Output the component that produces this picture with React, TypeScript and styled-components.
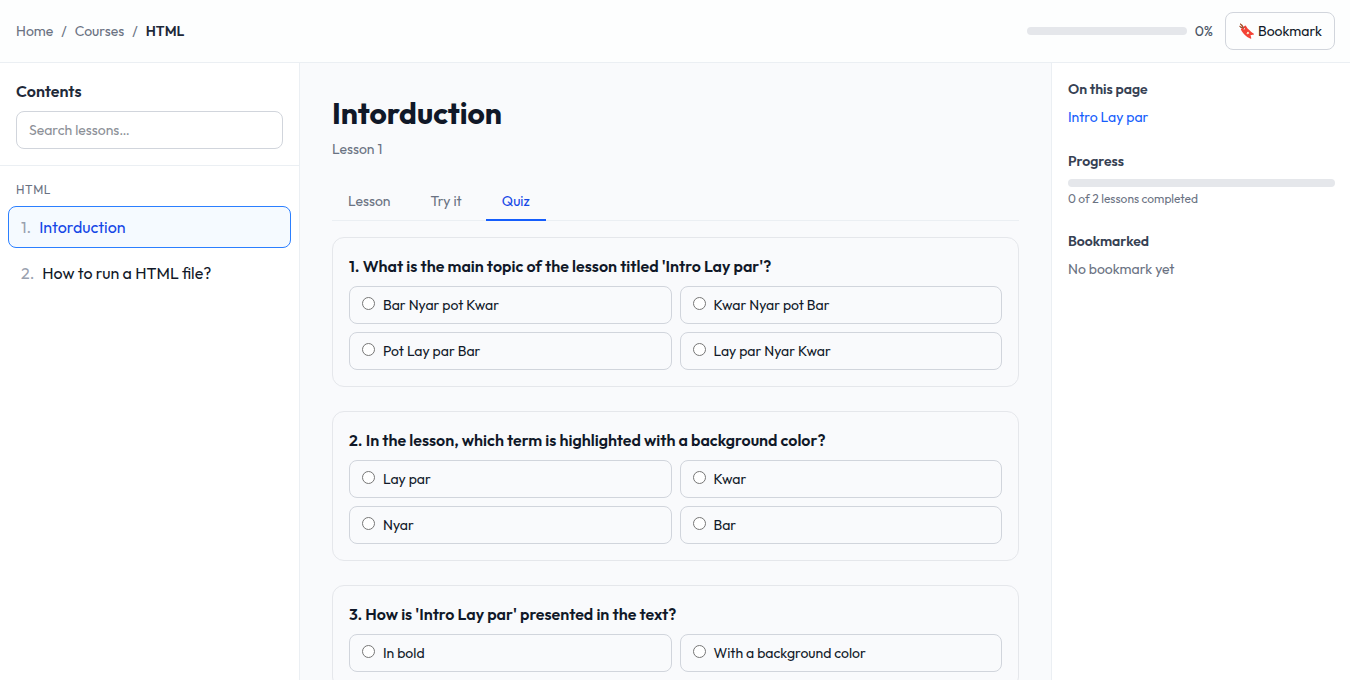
import React, { useState } from "react";
import styled, { createGlobalStyle } from "styled-components";

const GlobalStyle = createGlobalStyle`
  *, *::before, *::after { box-sizing: border-box; }
  body {
    margin: 0;
    background: #f9fafc;
    color: #101828;
    font-family: Outfit, Lato, "Liberation Sans", sans-serif;
    font-size: 16px;
    line-height: 24px;
    -webkit-font-smoothing: antialiased;
  }
  h1, h2, h3, p, ul, ol, fieldset { margin: 0; padding: 0; }
  ul, ol { list-style: none; }
  a { color: inherit; text-decoration: none; }
  button, input { font: inherit; color: inherit; }
`;

const Page = styled.div`
  display: flex;
  flex-direction: column;
  height: 100vh;
`;

const Header = styled.header`
  display: flex;
  align-items: center;
  justify-content: space-between;
  flex: none;
  padding: 12px 15px 12px 16px;
  background: #fdfefe;
  border-bottom: 1px solid #ebeff3;
`;

const Breadcrumbs = styled.ol`
  display: flex;
  gap: 8px;
  font-size: 14px;
  line-height: 20px;
  color: #6a7282;
`;

const Current = styled.span`
  font-weight: 600;
  color: #1e2939;
`;

const HeaderActions = styled.div`
  display: flex;
  align-items: center;
  gap: 12px;
`;

const ProgressGroup = styled.div`
  display: flex;
  align-items: center;
  gap: 8px;
  font-size: 14px;
  line-height: 20px;
  color: #4a5565;
`;

const Track = styled.div<{ $width: string }>`
  width: ${(p) => p.$width};
  height: 8px;
  border-radius: 4px;
  background: #e5e7eb;
  overflow: hidden;
`;

const Fill = styled.div`
  height: 100%;
  background: #155dfc;
`;

const BookmarkButton = styled.button`
  padding: 8px 12px;
  border: 1px solid #d1d5dc;
  border-radius: 8px;
  background: transparent;
  font-size: 14px;
  line-height: 20px;
  cursor: pointer;
`;

const Columns = styled.div`
  display: grid;
  grid-template-columns: 300px minmax(0, 1fr) 299px;
  flex: 1;
  min-height: 0;
`;

const Sidebar = styled.aside`
  background: #fff;
  border-right: 1px solid #ebeff3;
`;

const SearchPanel = styled.div`
  display: flex;
  flex-direction: column;
  gap: 8px;
  padding: 16px;
  border-bottom: 1px solid #ebeff3;
`;

const SidebarTitle = styled.h2`
  font-size: 16px;
  line-height: 24px;
  font-weight: 600;
  color: #1e2939;
`;

const SearchInput = styled.input`
  width: 100%;
  height: 38px;
  padding: 8px 12px;
  border: 1px solid #d1d5dc;
  border-radius: 8px;
  background: #fff;
  font-size: 14px;
  line-height: 20px;
  &::placeholder { color: #8c9097; opacity: 1; }
`;

const LessonNav = styled.nav`
  padding: 8px;
`;

const GroupLabel = styled.h3`
  padding: 8px;
  font-size: 12px;
  line-height: 16px;
  font-weight: 400;
  letter-spacing: 0.05em;
  text-transform: uppercase;
  color: #6a7282;
`;

const LessonList = styled.ol`
  display: flex;
  flex-direction: column;
  gap: 4px;
`;

const LessonLink = styled.a<{ $active?: boolean }>`
  display: flex;
  gap: 8px;
  padding: 8px 12px;
  border: 1px solid ${(p) => (p.$active ? "#2b7fff" : "transparent")};
  border-radius: 8px;
  background: ${(p) => (p.$active ? "#f5faff" : "transparent")};
  color: ${(p) => (p.$active ? "#1447e6" : "#101828")};
`;

const LessonNumber = styled.span`
  color: #99a1af;
`;

const Main = styled.main`
  padding: 32px;
  overflow-y: auto;
  scrollbar-width: none;
`;

const Title = styled.h1`
  font-size: 30px;
  line-height: 36px;
  font-weight: 700;
`;

const Subtitle = styled.p`
  margin-top: 8px;
  font-size: 14px;
  line-height: 20px;
  color: #6a7282;
`;

const Tabs = styled.div`
  display: flex;
  gap: 8px;
  margin: 24px 0 16px;
  border-bottom: 1px solid #ebeff3;
`;

const Tab = styled.button<{ $active: boolean }>`
  margin-bottom: -1px;
  padding: 8px 16px;
  border: 0;
  border-bottom: 2px solid ${(p) => (p.$active ? "#155dfc" : "transparent")};
  background: transparent;
  color: ${(p) => (p.$active ? "#1447e6" : "#6a7282")};
  font-size: 14px;
  line-height: 20px;
  cursor: pointer;
`;

const Questions = styled.form`
  display: flex;
  flex-direction: column;
  gap: 24px;
`;

const Card = styled.section`
  padding: 16px;
  border: 1px solid #e5e7eb;
  border-radius: 12px;
`;

const QuestionTitle = styled.h2`
  margin-bottom: 8px;
  font-size: 16px;
  line-height: 24px;
  font-weight: 600;
`;

const Options = styled.div`
  display: grid;
  grid-template-columns: repeat(2, minmax(0, 1fr));
  gap: 8px;
`;

const Option = styled.label`
  display: flex;
  align-items: flex-start;
  gap: 8px;
  padding: 8px 12px;
  border: 1px solid #d1d5dc;
  border-radius: 8px;
  font-size: 14px;
  line-height: 20px;
  cursor: pointer;
`;

const Radio = styled.input`
  flex: none;
  width: 13px;
  height: 13px;
  margin: 2px 0 0;
`;

const Details = styled.aside`
  display: flex;
  flex-direction: column;
  gap: 24px;
  padding: 16px 15px 16px 16px;
  background: #fff;
  border-left: 1px solid #ebeff3;
  font-size: 14px;
  line-height: 20px;
`;

const DetailsTitle = styled.h2`
  margin-bottom: 8px;
  font-size: 14px;
  line-height: 20px;
  font-weight: 600;
  color: #364153;
`;

const AnchorLink = styled.a`
  color: #155dfc;
`;

const Caption = styled.p`
  margin-top: 4px;
  font-size: 12px;
  line-height: 16px;
  color: #6a7282;
`;

const Muted = styled.p`
  color: #6a7282;
`;

const lessons = ["Intorduction", "How to run a HTML file?"];
const tabs = ["Lesson", "Try it", "Quiz"];
const questions = [
  {
    text: "What is the main topic of the lesson titled 'Intro Lay par'?",
    options: ["Bar Nyar pot Kwar", "Kwar Nyar pot Bar", "Pot Lay par Bar", "Lay par Nyar Kwar"],
  },
  {
    text: "In the lesson, which term is highlighted with a background color?",
    options: ["Lay par", "Kwar", "Nyar", "Bar"],
  },
  {
    text: "How is 'Intro Lay par' presented in the text?",
    options: ["In bold", "With a background color"],
  },
];

function ProgressBar({ value, width }: { value: number; width: string }) {
  return (
    <Track $width={width} role="progressbar" aria-label="Course progress" aria-valuenow={value} aria-valuemin={0} aria-valuemax={100}>
      <Fill style={{ width: `${value}%` }} />
    </Track>
  );
}

export default function App() {
  const [tab, setTab] = useState("Quiz");
  return (
    <Page>
      <GlobalStyle />
      <Header>
        <nav aria-label="Breadcrumb">
          <Breadcrumbs>
            <li><a href="#home">Home</a></li>
            <li aria-hidden="true">/</li>
            <li><a href="#courses">Courses</a></li>
            <li aria-hidden="true">/</li>
            <li><Current>HTML</Current></li>
          </Breadcrumbs>
        </nav>
        <HeaderActions>
          <ProgressGroup>
            <ProgressBar value={0} width="160px" />
            <span>0%</span>
          </ProgressGroup>
          <BookmarkButton type="button">🔖 Bookmark</BookmarkButton>
        </HeaderActions>
      </Header>
      <Columns>
        <Sidebar>
          <SearchPanel>
            <SidebarTitle>Contents</SidebarTitle>
            <SearchInput type="search" aria-label="Search lessons" placeholder="Search lessons…" />
          </SearchPanel>
          <LessonNav aria-label="Lessons">
            <GroupLabel>HTML</GroupLabel>
            <LessonList>
              {lessons.map((name, i) => (
                <li key={name}>
                  <LessonLink href={`#lesson-${i + 1}`} $active={i === 0}>
                    <LessonNumber>{i + 1}.</LessonNumber>
                    <span>{name}</span>
                  </LessonLink>
                </li>
              ))}
            </LessonList>
          </LessonNav>
        </Sidebar>
        <Main>
          <Title>Intorduction</Title>
          <Subtitle>Lesson 1</Subtitle>
          <Tabs role="tablist">
            {tabs.map((name) => (
              <Tab key={name} type="button" role="tab" aria-selected={tab === name} $active={tab === name} onClick={() => setTab(name)}>
                {name}
              </Tab>
            ))}
          </Tabs>
          <Questions>
            {questions.map((q, i) => (
              <Card key={q.text}>
                <QuestionTitle>{`${i + 1}. ${q.text}`}</QuestionTitle>
                <Options>
                  {q.options.map((option) => (
                    <Option key={option}>
                      <Radio type="radio" name={`question-${i + 1}`} value={option} />
                      <span>{option}</span>
                    </Option>
                  ))}
                </Options>
              </Card>
            ))}
          </Questions>
        </Main>
        <Details>
          <section>
            <DetailsTitle>On this page</DetailsTitle>
            <AnchorLink href="#intro-lay-par">Intro Lay par</AnchorLink>
          </section>
          <section>
            <DetailsTitle>Progress</DetailsTitle>
            <ProgressBar value={0} width="100%" />
            <Caption>0 of 2 lessons completed</Caption>
          </section>
          <section>
            <DetailsTitle>Bookmarked</DetailsTitle>
            <Muted>No bookmark yet</Muted>
          </section>
        </Details>
      </Columns>
    </Page>
  );
}
